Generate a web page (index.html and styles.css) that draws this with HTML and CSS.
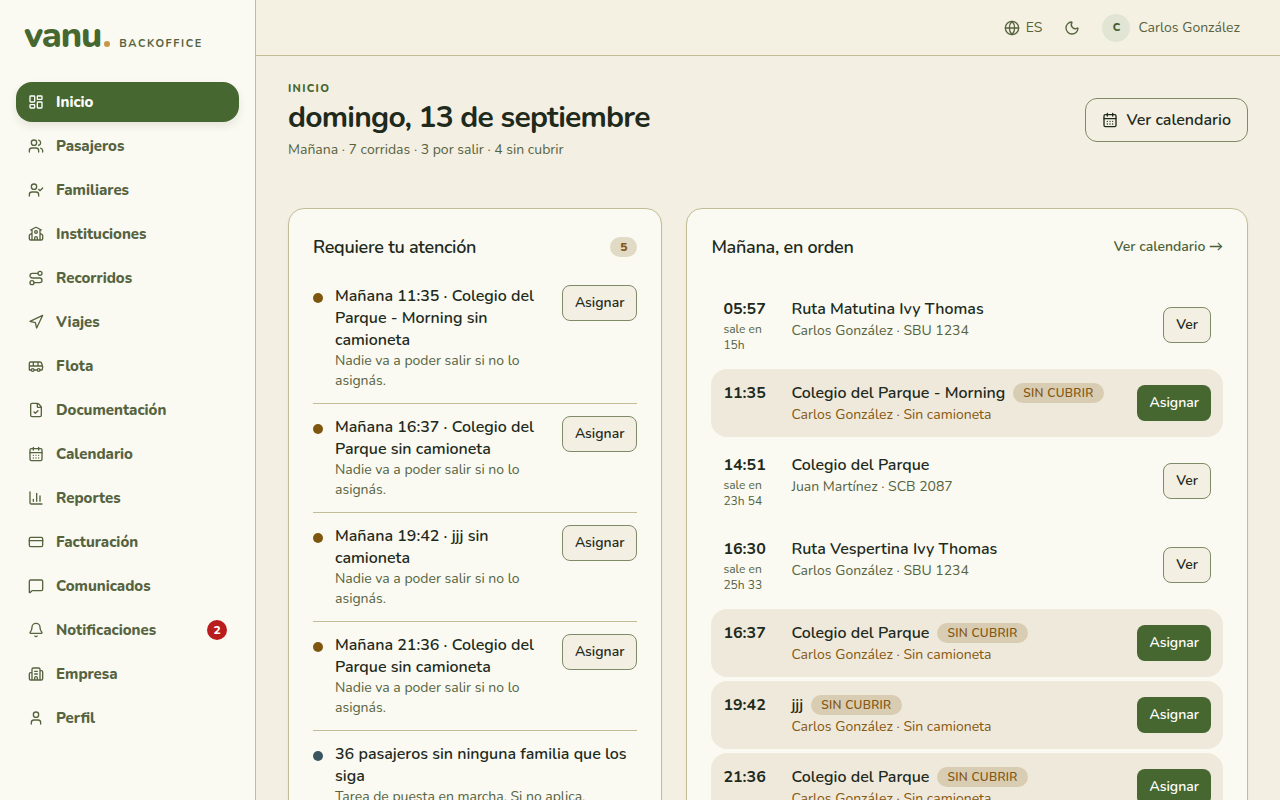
FILE: index.html
```html
<!DOCTYPE html>
<html lang="es">
<head>
<meta charset="utf-8">
<meta name="viewport" content="width=device-width, initial-scale=1">
<title>vanu. Backoffice</title>
<link rel="stylesheet" href="styles.css">
</head>
<body>
<svg class="sprite" aria-hidden="true">
  <symbol id="i-home" viewBox="0 0 24 24"><rect x="3" y="3" width="7" height="9" rx="1"/><rect x="14" y="3" width="7" height="5" rx="1"/><rect x="14" y="12" width="7" height="9" rx="1"/><rect x="3" y="16" width="7" height="5" rx="1"/></symbol>
  <symbol id="i-users" viewBox="0 0 24 24"><path d="M16 21v-2a4 4 0 0 0-4-4H6a4 4 0 0 0-4 4v2M16 3.128a4 4 0 0 1 0 7.744M22 21v-2a4 4 0 0 0-3-3.87"/><circle cx="9" cy="7" r="4"/></symbol>
  <symbol id="i-user-check" viewBox="0 0 24 24"><path d="m16 11 2 2 4-4M16 21v-2a4 4 0 0 0-4-4H6a4 4 0 0 0-4 4v2"/><circle cx="9" cy="7" r="4"/></symbol>
  <symbol id="i-school" viewBox="0 0 24 24"><path d="M14 21v-3a2 2 0 0 0-4 0v3M18 5v16M4 6l7.106-3.79a2 2 0 0 1 1.788 0L20 6M6 11l-3.52 2.147a1 1 0 0 0-.48.854V19a2 2 0 0 0 2 2h16a2 2 0 0 0 2-2v-5a1 1 0 0 0-.48-.853L18 11M6 5v16"/><circle cx="12" cy="9" r="2"/></symbol>
  <symbol id="i-route" viewBox="0 0 24 24"><circle cx="6" cy="19" r="3"/><path d="M9 19h8.5a3.5 3.5 0 0 0 0-7h-11a3.5 3.5 0 0 1 0-7H15"/><circle cx="18" cy="5" r="3"/></symbol>
  <symbol id="i-nav" viewBox="0 0 24 24"><polygon points="3 11 22 2 13 21 11 13 3 11"/></symbol>
  <symbol id="i-bus" viewBox="0 0 24 24"><path d="M8 6v6M15 6v6M2 12h19.6M18 18h3s.5-1.7.8-2.8c.1-.4.2-.8.2-1.2 0-.4-.1-.8-.2-1.2l-1.4-5C20.1 6.8 19.1 6 18 6H4a2 2 0 0 0-2 2v10h3M9 18h5"/><circle cx="7" cy="18" r="2"/><circle cx="16" cy="18" r="2"/></symbol>
  <symbol id="i-file" viewBox="0 0 24 24"><path d="M6 22a2 2 0 0 1-2-2V4a2 2 0 0 1 2-2h8a2.4 2.4 0 0 1 1.704.706l3.588 3.588A2.4 2.4 0 0 1 20 8v12a2 2 0 0 1-2 2zM14 2v5a1 1 0 0 0 1 1h5M9 15l2 2 4-4"/></symbol>
  <symbol id="i-calendar" viewBox="0 0 24 24"><path d="M8 2v4M16 2v4M3 10h18M8 14h.01M12 14h.01M16 14h.01M8 18h.01M12 18h.01M16 18h.01"/><rect x="3" y="4" width="18" height="18" rx="2"/></symbol>
  <symbol id="i-chart" viewBox="0 0 24 24"><path d="M3 3v16a2 2 0 0 0 2 2h16M18 17V9M13 17V5M8 17v-3"/></symbol>
  <symbol id="i-card" viewBox="0 0 24 24"><rect x="2" y="5" width="20" height="14" rx="2"/><path d="M2 10h20"/></symbol>
  <symbol id="i-message" viewBox="0 0 24 24"><path d="M22 17a2 2 0 0 1-2 2H6.828a2 2 0 0 0-1.414.586l-2.202 2.202A.71.71 0 0 1 2 21.286V5a2 2 0 0 1 2-2h16a2 2 0 0 1 2 2z"/></symbol>
  <symbol id="i-bell" viewBox="0 0 24 24"><path d="M10.268 21a2 2 0 0 0 3.464 0M3.262 15.326A1 1 0 0 0 4 17h16a1 1 0 0 0 .74-1.673C19.41 13.956 18 12.499 18 8A6 6 0 0 0 6 8c0 4.499-1.411 5.956-2.738 7.326"/></symbol>
  <symbol id="i-building" viewBox="0 0 24 24"><path d="M10 12h4M10 8h4M14 21v-3a2 2 0 0 0-4 0v3M6 10H4a2 2 0 0 0-2 2v7a2 2 0 0 0 2 2h16a2 2 0 0 0 2-2V9a2 2 0 0 0-2-2h-2M6 21V5a2 2 0 0 1 2-2h8a2 2 0 0 1 2 2v16"/></symbol>
  <symbol id="i-user" viewBox="0 0 24 24"><path d="M19 21v-2a4 4 0 0 0-4-4H9a4 4 0 0 0-4 4v2"/><circle cx="12" cy="7" r="4"/></symbol>
  <symbol id="i-globe" viewBox="0 0 24 24"><circle cx="12" cy="12" r="10"/><path d="M12 2a14.5 14.5 0 0 0 0 20 14.5 14.5 0 0 0 0-20M2 12h20"/></symbol>
  <symbol id="i-moon" viewBox="0 0 24 24"><path d="M20.985 12.486a9 9 0 1 1-9.473-9.472c.405-.022.617.46.402.803a6 6 0 0 0 8.268 8.268c.344-.215.825-.004.803.401"/></symbol>
</svg>
<div class="app">
  <aside class="sidebar">
    <a class="brand" href="#"><span class="brand-name">vanu</span><span class="brand-dot"></span><span class="brand-tag">BACKOFFICE</span></a>
    <nav class="nav" aria-label="Principal">
      <a class="nav-item active" href="#" aria-current="page"><svg class="icon"><use href="#i-home"/></svg>Inicio</a>
      <a class="nav-item" href="#"><svg class="icon"><use href="#i-users"/></svg>Pasajeros</a>
      <a class="nav-item" href="#"><svg class="icon"><use href="#i-user-check"/></svg>Familiares</a>
      <a class="nav-item" href="#"><svg class="icon"><use href="#i-school"/></svg>Instituciones</a>
      <a class="nav-item" href="#"><svg class="icon"><use href="#i-route"/></svg>Recorridos</a>
      <a class="nav-item" href="#"><svg class="icon"><use href="#i-nav"/></svg>Viajes</a>
      <a class="nav-item" href="#"><svg class="icon"><use href="#i-bus"/></svg>Flota</a>
      <a class="nav-item" href="#"><svg class="icon"><use href="#i-file"/></svg>Documentación</a>
      <a class="nav-item" href="#"><svg class="icon"><use href="#i-calendar"/></svg>Calendario</a>
      <a class="nav-item" href="#"><svg class="icon"><use href="#i-chart"/></svg>Reportes</a>
      <a class="nav-item" href="#"><svg class="icon"><use href="#i-card"/></svg>Facturación</a>
      <a class="nav-item" href="#"><svg class="icon"><use href="#i-message"/></svg>Comunicados</a>
      <a class="nav-item" href="#"><svg class="icon"><use href="#i-bell"/></svg>Notificaciones<span class="alert-count">2</span></a>
      <a class="nav-item" href="#"><svg class="icon"><use href="#i-building"/></svg>Empresa</a>
      <a class="nav-item" href="#"><svg class="icon"><use href="#i-user"/></svg>Perfil</a>
    </nav>
  </aside>
  <div class="page">
    <header class="topbar">
      <button class="tool" type="button"><svg class="icon"><use href="#i-globe"/></svg>ES</button>
      <button class="tool" type="button" aria-label="Modo oscuro"><svg class="icon"><use href="#i-moon"/></svg></button>
      <button class="account" type="button"><span class="avatar">C</span>Carlos González</button>
    </header>
    <main class="main">
      <div class="page-head">
        <div>
          <p class="eyebrow">INICIO</p>
          <h1>domingo, 13 de septiembre</h1>
          <p class="summary">Mañana · 7 corridas · 3 por salir · 4 sin cubrir</p>
        </div>
        <button class="btn btn-large" type="button"><svg class="icon"><use href="#i-calendar"/></svg>Ver calendario</button>
      </div>
      <div class="columns">
        <section class="card">
          <div class="card-head"><h2>Requiere tu atención</h2><span class="count">5</span></div>
          <ul class="tasks">
            <li class="task"><span class="dot"></span><div class="task-text"><h3>Mañana 11:35 · Colegio del Parque - Morning sin camioneta</h3><p>Nadie va a poder salir si no lo asignás.</p></div><button class="btn" type="button">Asignar</button></li>
            <li class="task"><span class="dot"></span><div class="task-text"><h3>Mañana 16:37 · Colegio del Parque sin camioneta</h3><p>Nadie va a poder salir si no lo asignás.</p></div><button class="btn" type="button">Asignar</button></li>
            <li class="task"><span class="dot"></span><div class="task-text"><h3>Mañana 19:42 · jjj sin camioneta</h3><p>Nadie va a poder salir si no lo asignás.</p></div><button class="btn" type="button">Asignar</button></li>
            <li class="task"><span class="dot"></span><div class="task-text"><h3>Mañana 21:36 · Colegio del Parque sin camioneta</h3><p>Nadie va a poder salir si no lo asignás.</p></div><button class="btn" type="button">Asignar</button></li>
            <li class="task"><span class="dot info"></span><div class="task-text"><h3>36 pasajeros sin ninguna familia que los siga</h3><p>Tarea de puesta en marcha. Si no aplica,</p></div></li>
          </ul>
        </section>
        <section class="card">
          <div class="card-head"><h2>Mañana, en orden</h2><a class="more" href="#">Ver calendario →</a></div>
          <ul class="runs">
            <li class="run"><div class="when"><time>05:57</time><small>sale en 15h</small></div><div class="run-text"><h3>Ruta Matutina Ivy Thomas</h3><p>Carlos González · SBU 1234</p></div><button class="btn" type="button">Ver</button></li>
            <li class="run open"><div class="when"><time>11:35</time></div><div class="run-text"><h3>Colegio del Parque - Morning<span class="tag">SIN CUBRIR</span></h3><p>Carlos González · Sin camioneta</p></div><button class="btn btn-primary" type="button">Asignar</button></li>
            <li class="run"><div class="when"><time>14:51</time><small>sale en 23h 54</small></div><div class="run-text"><h3>Colegio del Parque</h3><p>Juan Martínez · SCB 2087</p></div><button class="btn" type="button">Ver</button></li>
            <li class="run"><div class="when"><time>16:30</time><small>sale en 25h 33</small></div><div class="run-text"><h3>Ruta Vespertina Ivy Thomas</h3><p>Carlos González · SBU 1234</p></div><button class="btn" type="button">Ver</button></li>
            <li class="run open"><div class="when"><time>16:37</time></div><div class="run-text"><h3>Colegio del Parque<span class="tag">SIN CUBRIR</span></h3><p>Carlos González · Sin camioneta</p></div><button class="btn btn-primary" type="button">Asignar</button></li>
            <li class="run open"><div class="when"><time>19:42</time></div><div class="run-text"><h3>jjj<span class="tag">SIN CUBRIR</span></h3><p>Carlos González · Sin camioneta</p></div><button class="btn btn-primary" type="button">Asignar</button></li>
            <li class="run open"><div class="when"><time>21:36</time></div><div class="run-text"><h3>Colegio del Parque<span class="tag">SIN CUBRIR</span></h3><p>Carlos González · Sin camioneta</p></div><button class="btn btn-primary" type="button">Asignar</button></li>
          </ul>
        </section>
      </div>
    </main>
  </div>
</div>
</body>
</html>
```

FILE: styles.css
```css
:root {
  --ink: #1e2a1c;
  --muted: #56633f;
  --green: #466730;
  --amber: #85570f;
  --surface: #fafaf2;
  --canvas: #f4efe3;
  --line: #c3bd97;
}

* { box-sizing: border-box; }

body {
  margin: 0;
  background: var(--canvas);
  color: var(--ink);
  font: 400 14px/20px Nunito, "Nunito Sans", Lato, "Open Sans", sans-serif;
}

h1, h2, h3, p, ul { margin: 0; padding: 0; }
ul { list-style: none; }
a { color: inherit; text-decoration: none; }
button { font: inherit; color: inherit; cursor: pointer; }

.sprite { display: none; }

.icon {
  flex: none;
  width: 16px;
  height: 16px;
  fill: none;
  stroke: currentColor;
  stroke-width: 2;
  stroke-linecap: round;
  stroke-linejoin: round;
}

.app {
  display: grid;
  grid-template-columns: 256px minmax(0, 1fr);
  height: 100vh;
}

/* Sidebar */
.sidebar {
  overflow: auto;
  padding: 16px;
  background: var(--surface);
  border-right: 1px solid var(--line);
}

.brand {
  display: flex;
  align-items: baseline;
  padding: 0 8px;
  margin-bottom: 26px;
}
.brand-name {
  color: var(--green);
  font-size: 36px;
  font-weight: 800;
  line-height: 40px;
  letter-spacing: -0.03em;
}
.brand-dot {
  width: 6px;
  height: 6px;
  margin: 0 9px 0 3px;
  border-radius: 50%;
  background: #c8964a;
}
.brand-tag {
  color: var(--muted);
  font-size: 11px;
  font-weight: 700;
  line-height: 16px;
  letter-spacing: 0.14em;
}

.nav { display: flex; flex-direction: column; gap: 4px; }
.nav-item {
  display: flex;
  align-items: center;
  gap: 12px;
  min-height: 40px;
  padding: 0 12px;
  border-radius: 16px;
  color: var(--muted);
  font-size: 15px;
  font-weight: 800;
}
.nav-item.active {
  background: var(--green);
  color: #fff;
  box-shadow: 0 4px 8px rgba(60, 50, 20, 0.1);
}
.alert-count {
  min-width: 20px;
  margin-left: auto;
  border-radius: 10px;
  background: #b91c1c;
  color: #fff;
  font-size: 12px;
  font-weight: 800;
  text-align: center;
}

/* Top bar */
.page {
  display: flex;
  flex-direction: column;
  min-width: 0;
  min-height: 0;
}
.topbar {
  display: flex;
  flex: none;
  align-items: center;
  justify-content: flex-end;
  gap: 22px;
  height: 56px;
  padding: 0 40px;
  background: #f5f1e2;
  border-bottom: 1px solid var(--line);
  color: var(--muted);
}
.tool, .account {
  display: flex;
  align-items: center;
  gap: 6px;
  padding: 0;
  border: 0;
  background: none;
}
.account { gap: 8px; }
.avatar {
  width: 28px;
  border-radius: 50%;
  background: #e2e5d4;
  color: #3f5f33;
  font-size: 11px;
  font-weight: 800;
  line-height: 28px;
}

/* Page heading */
.main {
  flex: 1;
  min-height: 0;
  overflow: auto;
  padding: 24px 32px;
}
.page-head {
  display: flex;
  align-items: center;
  justify-content: space-between;
  gap: 24px;
  margin-bottom: 48px;
}
.eyebrow {
  color: var(--green);
  font-size: 11px;
  font-weight: 800;
  line-height: 18px;
  letter-spacing: 0.12em;
}
h1 {
  margin-bottom: 2px;
  font-size: 30px;
  font-weight: 700;
  line-height: 40px;
  letter-spacing: -0.025em;
}
.summary { color: var(--muted); }

.btn {
  display: inline-flex;
  flex: none;
  align-items: center;
  justify-content: center;
  gap: 8px;
  height: 36px;
  padding: 0 12px;
  border: 1px solid #7f8a68;
  border-radius: 8px;
  background: var(--canvas);
  color: var(--ink);
  font-weight: 600;
}
.btn-large {
  height: 44px;
  padding: 0 16px;
  border-radius: 12px;
  font-size: 16px;
}
.btn-primary {
  border: 0;
  background: var(--green);
  color: #fff;
}

/* Cards */
.columns {
  display: grid;
  grid-template-columns: minmax(0, 2fr) minmax(0, 3fr);
  gap: 24px;
}
.card {
  padding: 24px;
  background: var(--surface);
  border: 1px solid var(--line);
  border-radius: 16px;
  box-shadow: 0 1px 2px rgba(60, 50, 20, 0.08);
}
.card-head {
  display: flex;
  align-items: center;
  justify-content: space-between;
  min-height: 28px;
}
h2 {
  font-size: 18px;
  font-weight: 600;
  line-height: 28px;
  letter-spacing: -0.015em;
}
.count {
  padding: 0 10px;
  border-radius: 10px;
  background: #e1dac5;
  color: var(--amber);
  font-size: 12px;
  font-weight: 800;
}
.more { color: #4c6138; font-weight: 600; }

.tasks { padding-top: 12px; }
.task {
  display: flex;
  align-items: flex-start;
  gap: 12px;
  padding: 12px 0;
}
.task + .task { border-top: 1px solid var(--line); }
.dot {
  flex: none;
  width: 10px;
  height: 10px;
  margin-top: 8px;
  border-radius: 50%;
  background: #7f560f;
}
.dot.info { background: #3b5560; }
.task-text { flex: 1; min-width: 0; }
.task .btn { margin-left: 10px; }
h3 { font-size: 16px; font-weight: 600; line-height: 22px; }
.task p, .run p { color: var(--muted); }

.runs {
  display: flex;
  flex-direction: column;
  gap: 4px;
  padding-top: 24px;
}
.run {
  display: flex;
  align-items: center;
  gap: 12px;
  padding: 12px;
  border-radius: 16px;
}
.run.open { background: #efe9dc; }
.when {
  display: flex;
  flex: none;
  flex-direction: column;
  align-self: flex-start;
  width: 56px;
}
.when time { font-size: 16px; font-weight: 700; line-height: 24px; }
.when small { color: var(--muted); font-size: 12px; line-height: 16px; }
.run-text { flex: 1; align-self: flex-start; min-width: 0; }
.run h3 {
  display: flex;
  flex-wrap: wrap;
  align-items: center;
  column-gap: 8px;
  line-height: 24px;
}
.run.open p { color: var(--amber); }
.tag {
  padding: 0 10px;
  border-radius: 10px;
  background: #d8ccb3;
  color: var(--amber);
  font-size: 12px;
  line-height: 20px;
  letter-spacing: 0.025em;
}
```
